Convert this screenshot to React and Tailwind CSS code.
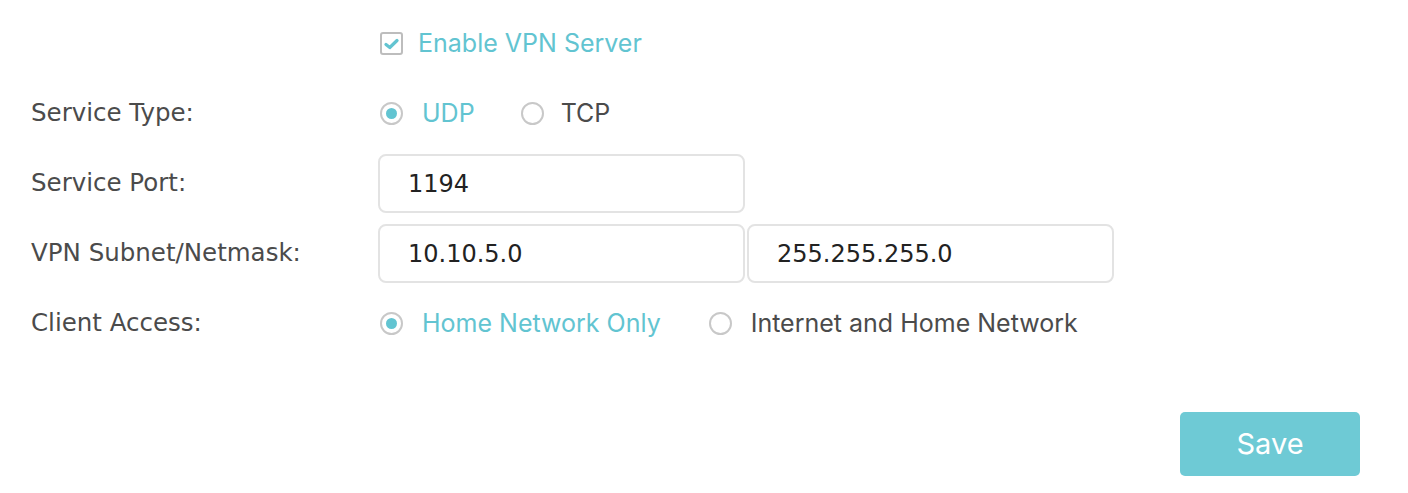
import { useState } from 'react';

const TEAL = 'text-[#62c4d1]';

const Radio = ({ checked, label, onClick, gap = 'gap-[19px]' }) => (
  <button type="button" onClick={onClick} className={`flex items-center ${gap}`}>
    <span className="w-[23px] h-[23px] rounded-full border-2 border-[#c8c8c8] flex items-center justify-center bg-white">
      {checked && <span className="w-[11px] h-[11px] rounded-full bg-[#62c4d1]" />}
    </span>
    <span className={`font-['Inter',sans-serif] text-[25px] ${checked ? TEAL : 'text-[#4b4b4b]'}`}>{label}</span>
  </button>
);

const Label = ({ children }) => (
  <div className="w-[347px] shrink-0 font-['DejaVu_Sans',sans-serif] text-[24.5px] text-[#4b4b4b]">{children}</div>
);

const inputClass = "w-[367px] h-[59px] px-[28px] rounded-[8px] border-2 border-[#e3e3e3] font-['DejaVu_Sans',sans-serif] text-[24px] text-[#222] focus:outline-none";

export default function App() {
  const [enabled, setEnabled] = useState(true);
  const [type, setType] = useState('udp');
  const [access, setAccess] = useState('home');
  const [port, setPort] = useState('1194');
  const [subnet, setSubnet] = useState('10.10.5.0');
  const [mask, setMask] = useState('255.255.255.0');

  return (
    <div className="w-[1408px] h-[493px] bg-white pl-[31px] pt-[30px]">
      <div className="flex items-center h-[27px] pl-[347px]">
        <button type="button" onClick={() => setEnabled(!enabled)} className="flex items-center gap-[15px] ml-[2px]">
          <span className="w-[23px] h-[23px] rounded-[3px] border-[2.5px] border-[#bdbdbd] flex items-center justify-center bg-white">
            {enabled && (
              <svg width="15" height="12" viewBox="0 0 15 12" fill="none">
                <path d="M2 6.5 L5.8 9.5 L13 2.5" stroke="#62c4d1" strokeWidth="3.2" strokeLinecap="round" strokeLinejoin="round" />
              </svg>
            )}
          </span>
          <span className={`font-['Inter',sans-serif] text-[25px] ${TEAL}`}>Enable VPN Server</span>
        </button>
      </div>

      <div className="flex items-center mt-[43px] h-[27px]">
        <Label>Service Type:</Label>
        <div className="flex items-center gap-[46px] ml-[2px]">
          <Radio checked={type === 'udp'} label="UDP" onClick={() => setType('udp')} />
          <Radio checked={type === 'tcp'} label="TCP" gap="gap-[17px]" onClick={() => setType('tcp')} />
        </div>
      </div>

      <div className="flex items-center mt-[27px]">
        <Label>Service Port:</Label>
        <input value={port} onChange={(e) => setPort(e.target.value)} className={inputClass} />
      </div>

      <div className="flex items-center mt-[11px]">
        <Label>VPN Subnet/Netmask:</Label>
        <input value={subnet} onChange={(e) => setSubnet(e.target.value)} className={inputClass} />
        <input value={mask} onChange={(e) => setMask(e.target.value)} className={`${inputClass} ml-[2px]`} />
      </div>

      <div className="flex items-center mt-[27px] h-[27px]">
        <Label>Client Access:</Label>
        <div className="flex items-center gap-[48px] ml-[2px]">
          <Radio checked={access === 'home'} label="Home Network Only" onClick={() => setAccess('home')} />
          <Radio checked={access === 'internet'} label="Internet and Home Network" onClick={() => setAccess('internet')} />
        </div>
      </div>

      <div className="flex justify-end pr-[48px] mt-[75px]">
        <button type="button" className="w-[180px] h-[64px] rounded-[5px] bg-[#6ecad5] text-white font-['Inter',sans-serif] text-[29px]">
          Save
        </button>
      </div>
    </div>
  );
}
